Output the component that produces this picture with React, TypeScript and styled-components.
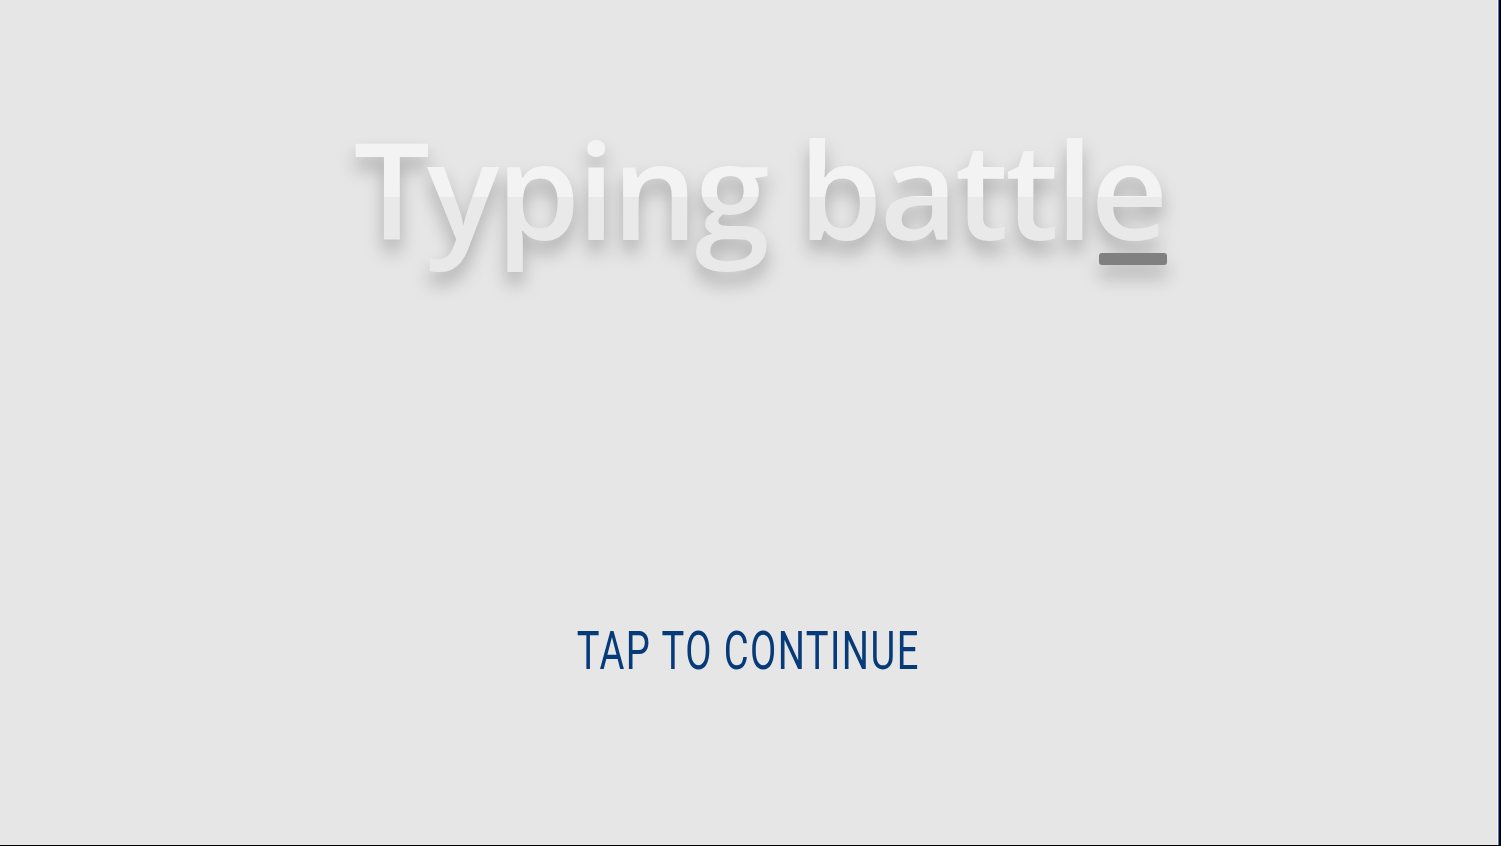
import React from 'react';
import styled, { createGlobalStyle, css } from 'styled-components';

const GlobalStyle = createGlobalStyle`
    html, body {
        margin: 0;
        padding: 0;
        height: 100%;
        overflow: hidden;
        background: #000;
    }
    #root {
        height: 100%;
    }
`;

const Screen = styled.div`
    box-sizing: border-box;
    height: 846px;
    width: 1501px;
    display: flex;
    background: #000;
    padding-bottom: 1px;
`;

const Stage = styled.main`
    flex: 1;
    display: flex;
    flex-direction: column;
    align-items: center;
    background: #e6e6e6;
    border-right: 1px solid #f4f4f4;
`;

const Edge = styled.div`
    width: 1px;
    background: #3b7ddd;
    margin-right: 2px;
`;

// glossy letters: light top half, slightly darker bottom half
const gloss = css`
    color: transparent;
    background: linear-gradient(to bottom, #f3f3f3 0%, #f3f3f3 55%, #e9e9e9 55%, #e9e9e9 100%);
    -webkit-background-clip: text;
    background-clip: text;
`;

const Title = styled.h1`
    margin: 96px 0 0 22px;
    font-family: 'Open Sans', 'Noto Sans', sans-serif;
    font-weight: 600;
    font-size: 135px;
    line-height: normal;
    letter-spacing: -3px;
    ${gloss}
    filter: drop-shadow(0 12px 9px rgba(0, 0, 0, 0.25));
`;

const Cursor = styled.span`
    position: relative;
    ${gloss}
    &::after {
        content: '';
        position: absolute;
        left: 9px;
        right: -2px;
        bottom: 15px;
        height: 12px;
        border-radius: 3px;
        background: #808080;
    }
`;

const Prompt = styled.button`
    margin-top: auto;
    margin-bottom: 167px;
    border: none;
    background: none;
    padding: 0;
    cursor: pointer;
    font-family: Roboto, 'Liberation Sans', sans-serif;
    font-weight: 400;
    font-size: 53px;
    line-height: 1;
    letter-spacing: 2px;
    color: #063a78;
    transform: scaleX(0.72);
`;

export default function App() {
    return (
        <>
            <GlobalStyle />
            <Screen>
                <Stage>
                    <Title>
                        Typing battl<Cursor>e</Cursor>
                    </Title>
                    <Prompt>TAP TO CONTINUE</Prompt>
                </Stage>
                <Edge />
            </Screen>
        </>
    );
}
